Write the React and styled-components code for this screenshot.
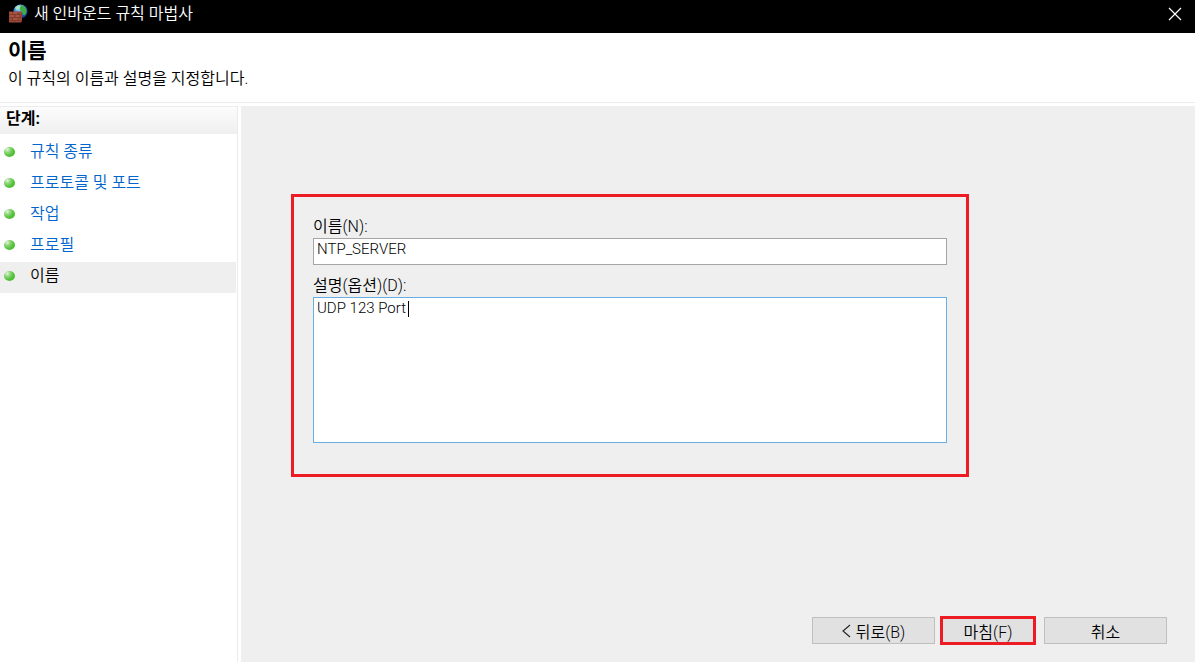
import React, { useState } from "react";
import styled, { createGlobalStyle } from "styled-components";

const steps = ["규칙 종류", "프로토콜 및 포트", "작업", "프로필", "이름"];

const FirewallIcon = () => (
  <svg width="20" height="20" viewBox="0 0 20 20" aria-hidden="true">
    <defs>
      <radialGradient id="globe" cx="0.4" cy="0.25" r="0.8">
        <stop offset="0" stopColor="#b9e6fa" />
        <stop offset="0.45" stopColor="#3a8fd8" />
        <stop offset="1" stopColor="#10246e" />
      </radialGradient>
    </defs>
    <circle cx="12.5" cy="7.5" r="7" fill="url(#globe)" />
    <path d="M13 1l3 1.5 2 3 .5 3-2 3-1.500-1-.5-3-2-1-1-2z" fill="#3fae3a" />
    <path d="M7 3.500l3-2 2.500.5-1 2.500-3 1.500z" fill="#a9e3c4" />
    <path d="M1 7.500h13V17l-1 1.500H1z" fill="#9c4a38" />
    <path
      d="M1 10.500h13M1 13.500h13M1 16.500h13M4.500 8v2.500M10 8v2.500M7 10.500v3M12 10.500v3M4.500 13.500v3M10 13.500v3M7 16.500V18"
      stroke="#74322a"
      strokeWidth="0.6"
    />
    <path d="M2 9h2M5.500 9h4M2 12h4M8 12h3M5.500 15h4" stroke="#bb654f" strokeWidth="0.8" />
  </svg>
);

const App = () => {
  const [name, setName] = useState("NTP_SERVER");
  const [description, setDescription] = useState("UDP 123 Port");

  return (
    <>
      <GlobalStyle />
      <Wizard>
        <TitleBar>
          <FirewallIcon />
          <TitleText>새 인바운드 규칙 마법사</TitleText>
          <CloseButton aria-label="닫기">
            <svg width="14" height="14" viewBox="0 0 14 14">
              <path d="M1 1l12 12M13 1L1 13" stroke="#fff" strokeWidth="1.2" />
            </svg>
          </CloseButton>
        </TitleBar>
        <Header>
          <h1>이름</h1>
          <p>이 규칙의 이름과 설명을 지정합니다.</p>
        </Header>
        <Body>
          <Sidebar>
            <SidebarTitle>단계:</SidebarTitle>
            <StepList>
              {steps.map((step, index) => {
                const isCurrent = index === steps.length - 1;
                return (
                  <Step key={step} $current={isCurrent}>
                    <Bullet />
                    {isCurrent ? <span>{step}</span> : <StepLink href="#">{step}</StepLink>}
                  </Step>
                );
              })}
            </StepList>
          </Sidebar>
          <Main>
            <Fields>
              <Label htmlFor="rule-name">이름(N):</Label>
              <NameInput
                id="rule-name"
                type="text"
                value={name}
                onChange={(e) => setName(e.target.value)}
              />
              <Label htmlFor="rule-description">설명(옵션)(D):</Label>
              <DescriptionBox>
                <Description
                  id="rule-description"
                  spellCheck={false}
                  value={description}
                  onChange={(e) => setDescription(e.target.value)}
                />
                <Caret />
              </DescriptionBox>
            </Fields>
            <Footer>
              <Button>
                <svg width="9" height="14" viewBox="0 0 9 14" aria-hidden="true">
                  <path d="M8 1L1 7l7 6" fill="none" stroke="#222" strokeWidth="1.1" />
                </svg>
                뒤로(B)
              </Button>
              <FinishButton>마침(F)</FinishButton>
              <Button>취소</Button>
            </Footer>
          </Main>
        </Body>
      </Wizard>
    </>
  );
};

export default App;

const GlobalStyle = createGlobalStyle`
  * {
    box-sizing: border-box;
  }

  body {
    margin: 0;
    background: #fff;
    color: #000;
  }

  body, button, input, textarea {
    font-family: Roboto, "Noto Sans CJK KR", sans-serif;
    font-weight: 350;
    font-size: 16px;
  }
`;

const Wizard = styled.div`
  display: flex;
  flex-direction: column;
  min-height: 100vh;
`;

const TitleBar = styled.header`
  display: flex;
  align-items: center;
  height: 33px;
  padding: 0 13px 6px 8px;
  background: #000;
  color: #fff;
`;

const TitleText = styled.span`
  flex: 1;
  margin-left: 6px;
  line-height: 24px;
`;

const CloseButton = styled.button`
  display: flex;
  padding: 0;
  border: 0;
  background: transparent;
`;

const Header = styled.div`
  height: 70px;
  padding: 4px 8px;
  border-bottom: 1px solid #ececec;

  h1 {
    margin: 0;
    font-size: 21px;
    font-weight: 700;
    line-height: 28px;
  }

  p {
    margin: 0;
    line-height: 28px;
  }
`;

const Body = styled.div`
  flex: 1;
  display: flex;
  gap: 3px;
  padding-top: 3px;
`;

const Sidebar = styled.nav`
  width: 238px;
  flex-shrink: 0;
  border-right: 1px solid #ebebeb;
`;

const SidebarTitle = styled.div`
  height: 28px;
  padding-left: 6px;
  border-top: 1px solid #ededed;
  background: linear-gradient(#fcfcfc, #efefef);
  color: #000;
  font-weight: 700;
  line-height: 24px;
`;

const StepList = styled.ul`
  list-style: none;
  margin: 0;
  padding: 4px 1px 0 0;
`;

const Step = styled.li`
  display: flex;
  align-items: center;
  gap: 15px;
  height: 31px;
  padding: 0 0 3px 4px;
  line-height: 24px;
  background: ${(props) => (props.$current ? "#efefef" : "transparent")};
`;

const Bullet = styled.span`
  width: 11px;
  height: 10px;
  border-radius: 50%;
  background: radial-gradient(circle at 30% 25%, #e4f5de 0%, #8fd678 28%, #4fc136 60%, #55bd3a 100%);
`;

const StepLink = styled.a`
  color: #0066cc;
  text-decoration: none;
`;

const Main = styled.main`
  flex: 1;
  display: flex;
  flex-direction: column;
  justify-content: space-between;
  padding: 88px 28px 17px 50px;
  background: #efefef;
`;

const Fields = styled.section`
  display: flex;
  flex-direction: column;
  margin-right: 198px;
  padding: 18px 19px 31px;
  border: 3px solid #ed1c24;
`;

const Label = styled.label`
  line-height: 23px;
`;

const NameInput = styled.input`
  height: 27px;
  margin-bottom: 9px;
  padding: 0 3px 5px;
  border: 1px solid #a5a5a5;
  border-radius: 0;
  background: #fff;
  color: #000;
  font-size: 15px;
  outline: none;
`;

const DescriptionBox = styled.div`
  position: relative;
  display: flex;
`;

const Description = styled.textarea`
  flex: 1;
  height: 146px;
  padding: 0 3px;
  border: 1px solid #66aee4;
  border-radius: 0;
  background: #fff;
  color: #000;
  font-size: 15px;
  line-height: 20px;
  resize: none;
  outline: none;
`;

const Caret = styled.span`
  position: absolute;
  top: 4px;
  left: 95px;
  width: 1px;
  height: 16px;
  background: #000;
`;

const Footer = styled.footer`
  display: flex;
  justify-content: flex-end;
  align-items: center;
`;

const Button = styled.button`
  display: flex;
  align-items: center;
  justify-content: center;
  gap: 5px;
  width: 123px;
  height: 27px;
  padding: 0;
  border: 1px solid #bfbfbf;
  background: #e1e1e1;
  color: #000;
`;

const FinishButton = styled(Button)`
  width: 96px;
  height: 29px;
  margin: 0 8px 0 5px;
  border: 3px solid #ed1c24;
`;
